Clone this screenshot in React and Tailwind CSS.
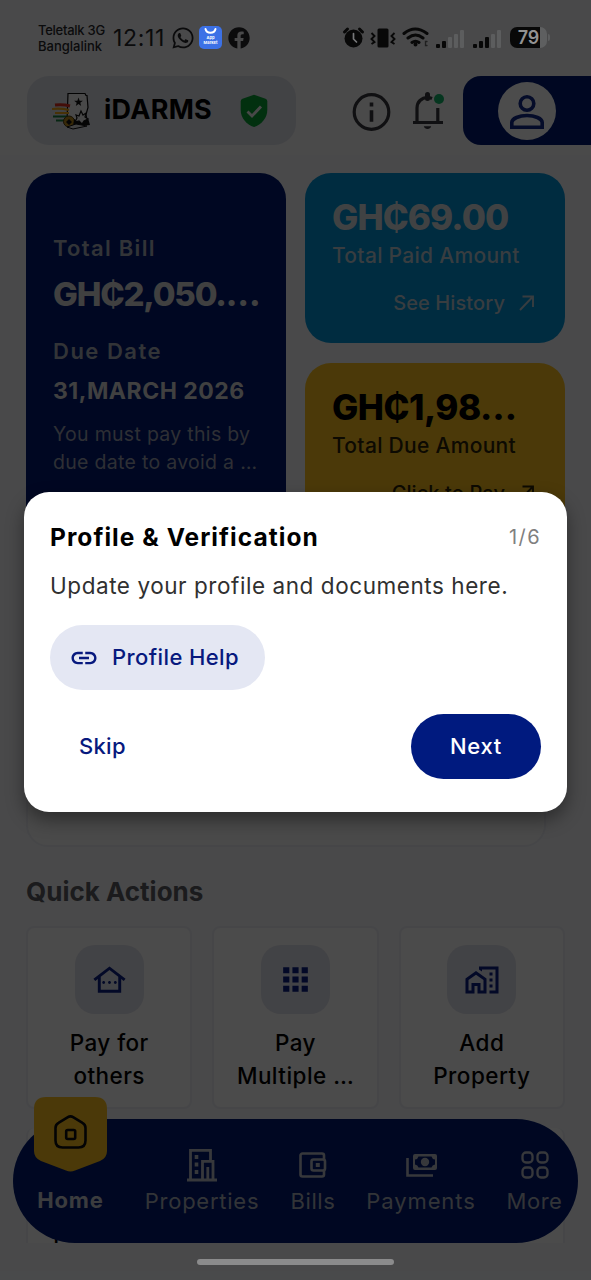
import { FaWhatsapp, FaFacebook } from "react-icons/fa";
import { MdOutlineHomeWork, MdOutlineOtherHouses, MdApps, MdLink } from "react-icons/md";

function Cell({ bars, className }) {
  return (
    <svg className={className} width="30" height="20" viewBox="0 0 30 20">
      {[4, 7, 11, 14, 18].map((h, i) => (
        <rect key={i} x={i * 6} y={19 - h} width="4" height={h} rx="1" fill={i < bars ? "#070707" : "#5c5d5e"} />
      ))}
    </svg>
  );
}

function StatusBar() {
  return (
    <div className="absolute inset-x-0 top-0 z-20 flex h-[60px] items-start text-[#0b0b0c]">
      <div className="ml-[38px] mt-[22px] w-[75px] whitespace-nowrap text-[13px] font-medium leading-[16px]">
        <div className="tracking-[-0.02em]">Teletalk 3G</div>
        <div>Banglalink</div>
      </div>
      <div className="mt-[24px] w-[58px] whitespace-nowrap text-[23px] leading-[28px] tracking-[0.03em]">12:11</div>
      <FaWhatsapp className="mt-[26px] size-[24px]" />
      <div className="ml-[4px] mt-[26px] flex h-[23px] w-[23px] flex-col items-center rounded-[5px] bg-[#3c71e6] text-white">
        <svg width="13" height="9" viewBox="0 0 13 9" fill="none" stroke="#fff" strokeWidth="2" strokeLinecap="round">
          <path d="M1.500 3c1.200 5 8.800 5 10 0" />
        </svg>
        <div className="mt-[1px] text-center text-[4px] font-bold leading-[4.500px]">App<br />Market</div>
      </div>
      <FaFacebook className="ml-[6px] mt-[27px] size-[22px]" />

      <svg className="ml-[92px] mt-[26px]" width="23" height="23" viewBox="0 0 23 23" fill="none">
        <circle cx="11.500" cy="12.500" r="9" fill="#080808" />
        <path d="M2.500 6l3-3M20.500 6l-3-3" stroke="#080808" strokeWidth="3" strokeLinecap="round" />
        <path d="M11.500 7.500v5.500l3 3" stroke="#77787a" strokeWidth="1.700" strokeLinecap="round" />
      </svg>
      <svg className="ml-[5px] mt-[27px]" width="26" height="22" viewBox="0 0 26 22" fill="none" stroke="#080808">
        <rect x="7.500" y="1.500" width="11" height="19" rx="1.500" fill="#080808" stroke="none" />
        <path d="M1.500 6l3 3-3 3 3 3-3 2M24.500 6l-3 3 3 3-3 3 3 2" strokeWidth="1.900" />
      </svg>
      <svg className="ml-[6px] mt-[27px]" width="27" height="21" viewBox="0 0 27 21" fill="none" stroke="#080808" strokeWidth="3" strokeLinecap="round">
        <path d="M2 6.500Q13 -2.500 25 6.500M6 11Q13.500 5 21 11M10 15.500Q13.500 13 17 15.500" />
        <circle cx="13.500" cy="17.500" r="1" strokeWidth="2" />
        <path d="M25 14.500h-1.500v4H25" strokeWidth="1.300" stroke="#202020" />
      </svg>
      <Cell bars={2} className="ml-[7px] mt-[29px]" />
      <Cell bars={3} className="ml-[7px] mt-[29px]" />
      <div className="ml-[7px] mt-[27px] flex h-[21px] w-[37px] items-center justify-center rounded-[7px] bg-[linear-gradient(90deg,#080808_80%,#5e5f60_80%)] text-[18px] font-semibold leading-none text-[#929292]">79</div>
      <div className="ml-[1px] mt-[34px] h-[7px] w-[2px] rounded-r bg-[#5c5d5e]" />
    </div>
  );
}

function Logo() {
  return (
    <svg width="40" height="38" viewBox="0 0 40 38" fill="none">
      <path d="M16 1.500h17l1 2 1 0 1 12-2 7 1 6-20 1z" fill="#f6f6f6" stroke="#0a0a0a" strokeWidth="1.200" />
      <path d="M26.500 5.500l1.100 3.200 3.300.1-2.600 2 .9 3.200-2.700-1.900-2.700 1.900.9-3.200-2.600-2 3.300-.1z" fill="#111" />
      <path d="M3 13q8-1 15 1" stroke="#e0301e" strokeWidth="3" />
      <path d="M0 17q9-1 17 1M3 21h14" stroke="#f0a818" strokeWidth="2.200" />
      <path d="M1 24.500h15M4 28.500h13" stroke="#16803c" strokeWidth="2.200" />
      <circle cx="17" cy="29.500" r="5.500" fill="#b98a1c" stroke="#4a3a10" strokeWidth="1" />
      <path d="M14 30l3-3 3 3-3 3zM22 27l6 3 8-4 2 7-9 1-8 2z" fill="#111" />
      <path d="M29 19l2 4 3-2-1 4 3 2-4 2-2 3-3-3-4 1 2-4-1-3 3 1z" fill="#eee" stroke="#111" strokeWidth="1.200" />
      <path d="M15 35l9-3 11 2-14 3z" fill="#ddd" stroke="#111" />
    </svg>
  );
}

function Header() {
  return (
    <div className="flex h-[95px] items-start bg-[#f8f7f7] pt-[16px]">
      <div className="ml-[27px] flex h-[69px] w-[269px] items-center rounded-[22px] bg-[#dddfe8] pl-[25px]">
        <Logo />
        <div className="ml-[12px] w-[136px] whitespace-nowrap text-[27px] font-bold tracking-[0.01em] text-black">iDARMS</div>
        <svg width="28" height="34" viewBox="0 0 28 34">
          <path d="M14 .8L25.500 4.700Q27.300 5.400 27.300 7.500V16c0 8-5.800 14.500-13.300 17C6.500 30.500.7 24 .7 16V7.500Q.7 5.400 2.500 4.700z" fill="#08a035" />
          <path d="M7.500 17.500l4.500 4.500 9-9.500" fill="none" stroke="#f2f2f2" strokeWidth="2.800" />
        </svg>
      </div>
      <svg className="ml-[56px] mt-[16px]" width="39" height="40" viewBox="0 0 39 40" fill="none" stroke="#37373c" strokeWidth="3.200">
        <circle cx="19.500" cy="20" r="17.300" />
        <path d="M19.500 18.300v11.500M19.500 10.500v4" strokeWidth="3.600" />
      </svg>
      <svg className="ml-[20px] mt-[14px]" width="36" height="42" viewBox="0 0 36 42" fill="none" stroke="#37373c" strokeWidth="3.200">
        <path d="M2 32.500h30M6 32V18c0-6 4.500-10.500 10.500-10.500 1.500 0 3 .3 4.500 1M26.800 18v14" />
        <path d="M16.500 4.500v4" strokeWidth="5" strokeLinecap="round" />
        <path d="M12.800 36.200h7.400c-.6 2-1.800 2.700-3.700 2.700s-3.100-.7-3.700-2.700z" fill="#37373c" stroke="none" />
        <circle cx="28" cy="9" r="5" fill="#12b568" stroke="none" />
      </svg>
      <div className="ml-[16px] flex h-[69px] flex-1 items-center rounded-l-[18px] bg-[#001a72] pl-[35px]">
        <div className="flex size-[58px] items-center justify-center rounded-full bg-white pt-[2px]">
          <svg width="36" height="36" viewBox="0 0 36 36" fill="none" stroke="#12288a" strokeWidth="3.600">
            <circle cx="18" cy="9.500" r="6.800" />
            <path d="M2.800 33.200V28.500c0-4 7.500-7 15.200-7s15.200 3 15.200 7v4.700z" />
          </svg>
        </div>
      </div>
    </div>
  );
}

function Arrow() {
  return (
    <svg width="15" height="16" viewBox="0 0 15 16" fill="none" stroke="currentColor" strokeWidth="1.900">
      <path d="M1 15L13.500 2M3.500 1.500H14V12" />
    </svg>
  );
}

function AmountCard({ amount, label, link, card, heading, text }) {
  return (
    <div className={"h-[170px] w-[260px] whitespace-nowrap rounded-[26px] pl-[27px] pt-[24px] " + card}>
      <div className={"text-[35px] font-extrabold leading-[40px] " + heading}>{amount}</div>
      <div className={"mt-[5px] text-[21px] font-medium leading-[28px] tracking-[0.3px] " + text}>{label}</div>
      <div className={"mt-[19px] flex items-center justify-end pr-[31px] text-[20px] font-medium leading-[28px] tracking-[0.1px] " + text}>
        <span className="mr-[14px]">{link}</span>
        <Arrow />
      </div>
    </div>
  );
}

function Summary() {
  return (
    <div className="mt-[18px] flex gap-[19px] pl-[26px]">
      <div className="h-[360px] w-[260px] whitespace-nowrap rounded-[26px] bg-[#001a72] pl-[27px] pt-[61px]">
        <div className="text-[22px] font-semibold leading-[28px] tracking-[1.3px] text-[#a9adb9]">Total Bill</div>
        <div className="mt-[14px] text-[33px] font-extrabold leading-[36px] tracking-[-1.200px] text-[#d6d6d6]">GH₵2,050.…</div>
        <div className="mt-[25px] text-[22px] font-semibold leading-[28px] tracking-[1.500px] text-[#a9adb9]">Due Date</div>
        <div className="mt-[12px] text-[23px] font-bold leading-[28px] tracking-[0.500px] text-[#d6d6d6]">31,MARCH 2026</div>
        <div className="mt-[15px] text-[19.500px] leading-[28px] tracking-[0.3px] text-[#9a9fb0]">
          <div>You must pay this by</div>
          <div>due date to avoid a …</div>
        </div>
      </div>
      <div className="flex flex-col gap-[20px]">
        <AmountCard amount="GH₵69.00" label="Total Paid Amount" link="See History" card="bg-[#0093d8]" heading="tracking-[-0.9px] text-[#d8dde0]" text="text-[#bccbd5]" />
        <AmountCard amount="GH₵1,98…" label="Total Due Amount" link="Click to Pay" card="bg-[#fac01e]" heading="tracking-[-0.500px] text-black" text="text-[#2c2309]" />
      </div>
    </div>
  );
}

const actions = [
  { lines: ["Pay for", "others"], Icon: MdOutlineOtherHouses, size: "size-[35px]" },
  { lines: ["Pay", "Multiple …"], Icon: MdApps, size: "size-[37px]" },
  { lines: ["Add", "Property"], Icon: MdOutlineHomeWork, size: "size-[36px]" },
];

function QuickActions() {
  return (
    <div className="pl-[26px]">
      <div className="mt-[29px] whitespace-nowrap text-[26px] font-bold leading-[32px] text-[#5c5d63]">Quick Actions</div>
      <div className="mt-[18px] grid w-[539px] grid-cols-3 gap-[20px]">
        {actions.map(({ lines, Icon, size }) => (
          <div key={lines[1]} className="flex h-[183px] flex-col items-center rounded-[8px] border-2 border-[#e9ebf1] bg-[#fbfafa] pt-[17px] text-[22.500px] font-medium leading-[33px] text-black">
            <div className="mb-[12px] flex size-[69px] shrink-0 items-center justify-center rounded-[20px] bg-[#dddfe9]">
              <Icon className={"text-[#0a1f84] " + size} />
            </div>
            {lines.map((l) => <div key={l} className="whitespace-nowrap tracking-[0.02em]">{l}</div>)}
          </div>
        ))}
      </div>
      <div className="mt-[19px] h-[115px] w-[539px] overflow-hidden rounded-t-[8px] border-x-2 border-[#e9ebf1] bg-[#fbfafa] pl-[21px] pt-[96px] text-[22px] font-medium leading-[26px] text-black">T</div>
    </div>
  );
}

function BuildingIcon() {
  return (
    <svg width="30" height="34" viewBox="0 0 30 34" fill="none" stroke="currentColor" strokeWidth="2.800">
      <path d="M0 32h30M3.500 32V2.300h20V12M15.500 32V13.300H26V32M20.800 32V19" />
      <path d="M9.500 7v4M9.500 14.500v4M9.500 22v4" strokeWidth="3.600" />
    </svg>
  );
}

function WalletIcon() {
  return (
    <svg width="28" height="26" viewBox="0 0 28 26" fill="none" stroke="currentColor" strokeWidth="2.600">
      <path d="M25 7V3.500a2 2 0 0 0-2-2H3.500a2 2 0 0 0-2 2v19a2 2 0 0 0 2 2H23a2 2 0 0 0 2-2V19" />
      <rect x="12.500" y="7.500" width="13.500" height="11" rx="2" />
      <rect x="16.800" y="11" width="4" height="4" fill="currentColor" stroke="none" />
    </svg>
  );
}

function PaymentsIcon() {
  return (
    <svg width="31" height="24" viewBox="0 0 31 24" fill="none" stroke="currentColor" strokeWidth="2.600">
      <path d="M1.500 5v17.500H27" />
      <path fillRule="evenodd" d="M9 1h20a2 2 0 0 1 2 2v12a2 2 0 0 1-2 2H9a2 2 0 0 1-2-2V3a2 2 0 0 1 2-2zm3.500 2.500a4 4 0 0 1-3.500 3v5a4 4 0 0 1 3.500 3h13a4 4 0 0 1 3.500-3v-5a4 4 0 0 1-3.500-3z" fill="currentColor" stroke="none" />
      <circle cx="19" cy="9" r="4.200" fill="currentColor" stroke="none" />
    </svg>
  );
}

function MoreIcon() {
  return (
    <svg width="28" height="28" viewBox="0 0 28 28" fill="none" stroke="currentColor" strokeWidth="2.300">
      {[1.500, 16.500].map((x) => [1.500, 16.500].map((y) => <rect key={x + "-" + y} x={x} y={y} width="10" height="10" rx="3.500" />))}
    </svg>
  );
}

const tabs = [
  { label: "Properties", Icon: BuildingIcon, width: "w-[146px]", space: "tracking-[0.75px]" },
  { label: "Bills", Icon: WalletIcon, width: "w-[76px]", space: "tracking-[0.6px]" },
  { label: "Payments", Icon: PaymentsIcon, width: "w-[140px]", space: "tracking-[0.9px]" },
  { label: "More", Icon: MoreIcon, width: "w-[87px]", space: "tracking-[0.500px]" },
];

function BottomNav() {
  return (
    <div className="absolute left-[13px] top-[1119px] flex h-[124px] w-[565px] rounded-full bg-[#001a72] text-[22px] leading-[28px] text-[#a9adb9]">
      <div className="-mt-[22px] flex w-[115px] flex-col items-center">
        <svg width="73" height="76" viewBox="0 0 73 76" fill="none">
          <path d="M12 0h49q12 0 12 12v42q0 7-7 10L41 73.500q-4.500 2-9 0L7 64q-7-3-7-10V12Q0 0 12 0z" fill="#fac01e" />
          <path d="M21.500 31q0-3.500 3-5.200l9-5.500q3-1.800 6 0l9 5.500q3 1.700 3 5.200v12.500q0 7-7 7h-16q-7 0-7-7z" stroke="#0b0b10" strokeWidth="2.600" />
          <rect x="32.200" y="33" width="9" height="9" rx="1.500" stroke="#0b0b10" strokeWidth="2.600" />
        </svg>
        <div className="mt-[13px] font-bold tracking-[0.8px] text-[#c6c8cf]">Home</div>
      </div>
      <div className="ml-[1px] flex">
        {tabs.map(({ label, Icon, width, space }) => (
          <div key={label} className={"flex flex-col items-center whitespace-nowrap " + width}>
            <div className="mt-[28px] flex h-[35px] items-center text-[#b9bcc6]"><Icon /></div>
            <div className={"mt-[5px] " + space}>{label}</div>
          </div>
        ))}
      </div>
    </div>
  );
}

function TourDialog() {
  return (
    <div className="absolute left-[24px] top-[492px] z-20 flex h-[320px] w-[543px] flex-col whitespace-nowrap rounded-[25px] bg-white px-[26px] pt-[29px] text-[22px] shadow-[0_8px_18px_rgba(0,0,0,0.4)]">
      <div className="flex items-center justify-between leading-[32px]">
        <div className="text-[24.500px] font-bold tracking-[1.050px] text-black">Profile &amp; Verification</div>
        <div className="text-[20px] tracking-[0.07em] text-[#808080]">1/6</div>
      </div>
      <div className="mt-[17px] text-[22.500px] leading-[32px] tracking-[0.56px] text-[#303030]">Update your profile and documents here.</div>
      <div className="mt-[23px] flex h-[65px] w-[215px] items-center rounded-full bg-[#e4e7f3] pl-[19px] font-medium tracking-[0.4px] text-[#07197e]">
        <MdLink className="mr-[13px] size-[30px]" />
        Profile Help
      </div>
      <div className="mt-[24px] flex items-center justify-between font-medium">
        <div className="pl-[29px] tracking-[0.3px] text-[#07197e]">Skip</div>
        <div className="flex h-[65px] w-[130px] items-center justify-center rounded-full bg-[#001a7f] tracking-[0.7px] text-white">Next</div>
      </div>
    </div>
  );
}

export default function App() {
  return (
    <div className="relative h-[1280px] w-[591px] overflow-hidden bg-[#f3f5f9] font-['Inter','Noto_Sans',sans-serif]">
      <div className="h-[60px] bg-[#f3f5f9]" />
      <Header />
      <Summary />
      <div className="ml-[26px] mt-[20px] h-[294px] w-[520px] rounded-[22px] border-2 border-[#e9ebf1] bg-[#f9f8f8]" />
      <QuickActions />
      <BottomNav />
      <div className="absolute inset-0 z-10 bg-black/70" />
      <StatusBar />
      <TourDialog />
      <div className="absolute left-[197px] top-[1259px] z-20 h-[6px] w-[197px] rounded-full bg-[#8b8b8c]" />
    </div>
  );
}
